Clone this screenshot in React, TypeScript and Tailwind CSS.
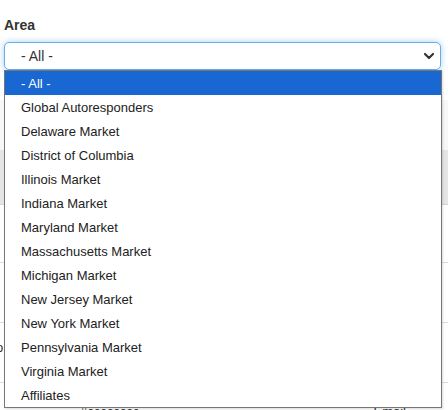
import React from 'react'

const areas = [
  '- All -',
  'Global Autoresponders',
  'Delaware Market',
  'District of Columbia',
  'Illinois Market',
  'Indiana Market',
  'Maryland Market',
  'Massachusetts Market',
  'Michigan Market',
  'New Jersey Market',
  'New York Market',
  'Pennsylvania Market',
  'Virginia Market',
  'Affiliates',
]

const App = () => {
  return (
    <div className="relative h-[410px] w-[448px] overflow-hidden bg-white font-['Liberation_Sans',Arial,sans-serif] text-[13px] text-[#222]">
      {/* Filtre */}
      <div className="px-1 pt-[17px]">
        <label className="block text-[14px] font-bold text-[#333] leading-[16px]">Area</label>
        <div className="mt-[9px] flex h-[28px] w-[437px] items-center justify-between rounded-[5px] border border-[#66afe9] bg-white pl-[16px] pr-[5px] shadow-[0_0_6px_rgba(102,175,233,0.6)]">
          <span className="text-[14px] text-[#333]">- All -</span>
          <svg width="12" height="12" viewBox="0 0 12 12" className="text-[#333]">
            <path d="M2 4l4 4 4-4" fill="none" stroke="currentColor" strokeWidth="2.2" strokeLinecap="round" strokeLinejoin="round" />
          </svg>
        </div>
      </div>

      {/* Table derrière */}
      <div className="mt-[30px]">
        <div className="h-[50px] bg-[#f7f7f7]" />
        <div className="h-[55px] bg-[#e5e5e5] border-b border-[#d6d6d6]" />
        <div className="h-[58px] border-b border-[#dcdcdc]" />
        <div className="h-[60px] border-b border-[#dcdcdc]" />
        <div className="h-[60px] border-b border-[#dcdcdc] flex items-start pt-[15px]">
          <span className="-ml-[4px] text-[13px] text-[#333]">o</span>
        </div>
        <div className="flex h-[30px] items-start pt-[19px]">
          <span className="ml-[80px] text-[13px] text-[#333]">#cccccccc</span>
          <span className="ml-auto mr-[42px] text-[13px] text-[#333]">Email</span>
        </div>
      </div>

      {/* Liste déroulante */}
      <ul className="absolute left-[4px] top-[70px] w-[438px] border border-[#767676] bg-white shadow-[1px_1px_2px_rgba(0,0,0,0.15)]">
        {areas.map((area, i) => (
          <li
            key={area}
            className={
              i === 0
                ? 'flex h-[24px] items-center bg-[#1967d2] pl-[16px] pt-[2px] text-white'
                : 'flex h-[24px] items-center pl-[16px] pt-[2px] text-[#222]'
            }
          >
            {area}
          </li>
        ))}
      </ul>
    </div>
  )
}

export default App
